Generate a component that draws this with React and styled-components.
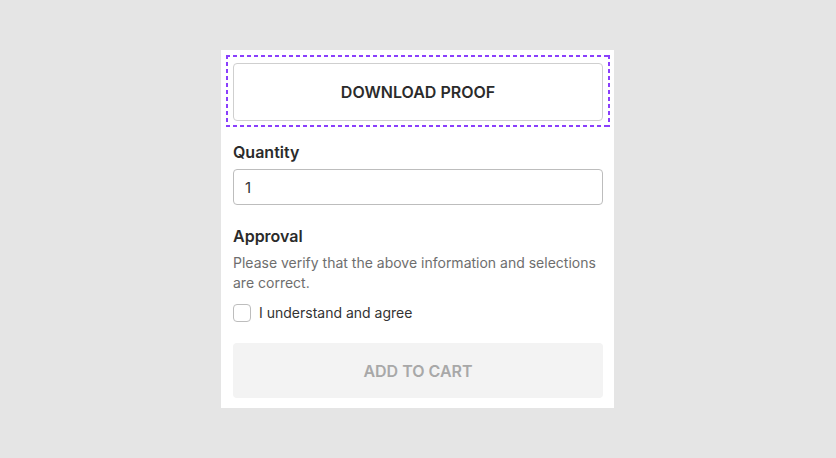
import React, { useState } from 'react'
import styled, { createGlobalStyle } from 'styled-components';

const GlobalStyle = createGlobalStyle`
  html, body {
    margin: 0;
    padding: 0;
    background: #e5e5e5;
    font-family: Inter, "Noto Sans", sans-serif;
  }
  * { box-sizing: border-box; }
`;

const App = () => {
  const [qty, setQty] = useState('1');
  const [agree, setAgree] = useState(false);

  return (
    <Page>
      <GlobalStyle />
      <Card>
        <FocusRing>
          <ProofButton type="button">DOWNLOAD PROOF</ProofButton>
        </FocusRing>

        <Field $top={13}>
          <Label htmlFor="qty">Quantity</Label>
          <Input id="qty" value={qty} onChange={e => setQty(e.target.value)} />
        </Field>

        <Field $top={19}>
          <Label as="h3">Approval</Label>
          <Note>Please verify that the above information and selections are correct.</Note>
          <CheckRow>
            <Box type="checkbox" checked={agree} onChange={() => setAgree(!agree)} />
            <span>I understand and agree</span>
          </CheckRow>
        </Field>

        <CartButton type="button" disabled={!agree}>ADD TO CART</CartButton>
      </Card>
    </Page>
  )
}

const Page = styled.div`
  min-height: 458px;
  display: flex;
  justify-content: center;
  align-items: flex-start;
  padding: 50px 1px 0 0;
`;

const Card = styled.div`
  width: 393px;
  background: #fff;
  padding: 5px 11px 10px 12px;
  display: flex;
  flex-direction: column;
`;

const dash = '#8a3ffc';

const FocusRing = styled.div`
  margin: 0 -7px;
  padding: 8px 7px 6px;
  background:
    repeating-linear-gradient(90deg, ${dash} 0 4px, transparent 4px 7px) top left / 100% 2px no-repeat,
    repeating-linear-gradient(90deg, ${dash} 0 4px, transparent 4px 7px) bottom left / 100% 2px no-repeat,
    repeating-linear-gradient(180deg, ${dash} 0 4px, transparent 4px 7px) top left / 2px 100% no-repeat,
    repeating-linear-gradient(180deg, ${dash} 0 4px, transparent 4px 7px) top right / 2px 100% no-repeat;
`;

const ProofButton = styled.button`
  display: block;
  height: 58px;
  width: 100%;
  background: #fff;
  border: 1px solid #cfcfcf;
  border-radius: 4px;
  font-family: inherit;
  font-size: 16px;
  font-weight: 600;
  color: #2b2b2b;
  cursor: pointer;
  outline: none;
`;

const Field = styled.div`
  display: flex;
  flex-direction: column;
  gap: 5px;
  margin-top: ${({ $top }) => $top}px;
`;

const Label = styled.label`
  margin: 0;
  font-size: 16px;
  line-height: 24px;
  font-weight: 600;
  color: #2b2b2b;
`;

const Input = styled.input`
  height: 36px;
  width: 100%;
  border: 1px solid #bdbdbd;
  border-radius: 4px;
  padding: 0 11px;
  font-family: inherit;
  font-size: 15px;
  color: #333;
  outline: none;
`;

const Note = styled.p`
  margin: 0;
  font-size: 14px;
  line-height: 20px;
  color: #6e6e6e;
`;

const CheckRow = styled.label`
  display: flex;
  align-items: center;
  gap: 8px;
  margin-top: 3px;
  font-size: 14px;
  line-height: 24px;
  color: #333;
  cursor: pointer;
`;

const Box = styled.input`
  appearance: none;
  width: 18px;
  height: 18px;
  margin: 0;
  border: 1px solid #bdbdbd;
  border-radius: 4px;
  background: #fff;
  &:checked {
    background: #333;
    border-color: #333;
  }
`;

const CartButton = styled.button`
  margin-top: 18px;
  height: 55px;
  width: 100%;
  border: none;
  border-radius: 4px;
  background: #f3f3f3;
  font-family: inherit;
  font-size: 16px;
  font-weight: 600;
  color: #a8a8a8;
  &:disabled { cursor: not-allowed; }
`;

export default App
